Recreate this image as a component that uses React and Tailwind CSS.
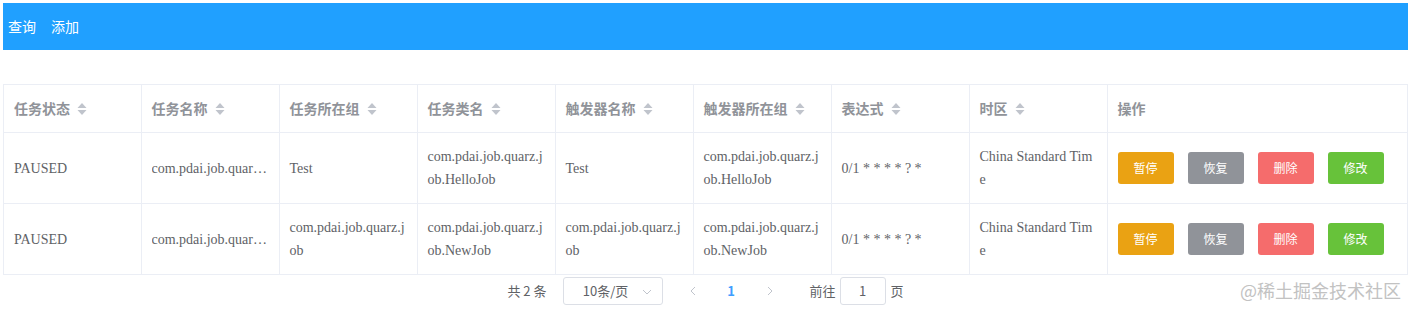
import React from 'react'

const cols = [
  { key: 'state', label: '任务状态' },
  { key: 'name', label: '任务名称' },
  { key: 'group', label: '任务所在组' },
  { key: 'cls', label: '任务类名' },
  { key: 'trigger', label: '触发器名称' },
  { key: 'tgroup', label: '触发器所在组' },
  { key: 'cron', label: '表达式' },
  { key: 'tz', label: '时区' },
]

const rows = [
  {
    state: 'PAUSED',
    name: 'com.pdai.job.quarz.job.HelloJob',
    group: 'Test',
    cls: 'com.pdai.job.quarz.job.HelloJob',
    trigger: 'Test',
    tgroup: 'com.pdai.job.quarz.job.HelloJob',
    cron: '0/1 * * * * ? *',
    tz: 'China Standard Time',
  },
  {
    state: 'PAUSED',
    name: 'com.pdai.job.quarz.job.NewJob',
    group: 'com.pdai.job.quarz.job',
    cls: 'com.pdai.job.quarz.job.NewJob',
    trigger: 'com.pdai.job.quarz.job',
    tgroup: 'com.pdai.job.quarz.job.NewJob',
    cron: '0/1 * * * * ? *',
    tz: 'China Standard Time',
  },
]

const actions = [
  { label: '暂停', cls: 'bg-[#eaa213]' },
  { label: '恢复', cls: 'bg-[#909399]' },
  { label: '删除', cls: 'bg-[#f56c6c]' },
  { label: '修改', cls: 'bg-[#67c23a]' },
]

function SortCaret() {
  return (
    <svg width="10" height="12" viewBox="0 0 10 12" className="ml-[7px] inline-block">
      <path d="M5 0 L9.5 5 L0.5 5 Z" fill="#c0c4cc" />
      <path d="M0.5 7 L9.5 7 L5 12 Z" fill="#c0c4cc" />
    </svg>
  )
}

const sans = { fontFamily: '"Noto Sans CJK SC", "Liberation Sans", sans-serif' }
const serif = { fontFamily: '"Liberation Serif", "Noto Sans CJK SC", serif' }

export default function App() {
  return (
    <div className="relative w-[1413px] h-[313px] bg-white pt-[3px]" style={sans}>
      {/* top bar */}
      <div className="ml-[3px] w-[1405px] h-[47px] bg-[#20a0ff] flex items-center pl-[5px] gap-[15px] text-white text-[14px]">
        <span>查询</span>
        <span>添加</span>
      </div>

      {/* table */}
      <div className="ml-[3px] mt-[34px] w-[1405px] border-l border-t border-[#ebeef5]">
        <table className="w-full table-fixed border-collapse text-[14px]">
          <colgroup>
            {cols.map((c, i) => <col key={c.key} className={i === 0 ? 'w-[137px]' : 'w-[138px]'} />)}
            <col />
          </colgroup>
          <thead>
            <tr>
              {cols.map(c => (
                <th key={c.key} className="border-r border-b border-[#ebeef5] py-[12px] px-[10px] text-left font-bold text-[#909399] leading-[23px]">
                  <div className="flex items-center">
                    <span>{c.label}</span>
                    <SortCaret />
                  </div>
                </th>
              ))}
              <th className="border-r border-b border-[#ebeef5] py-[12px] px-[10px] text-left font-bold text-[#909399] leading-[23px]">操作</th>
            </tr>
          </thead>
          <tbody>
            {rows.map((r, i) => (
              <tr key={i}>
                {cols.map(c => (
                  <td key={c.key} className="border-r border-b border-[#ebeef5] py-[12px] px-[10px] align-middle text-[#606266] leading-[23px]" style={serif}>
                    {c.key === 'name' ? (
                      <div className="truncate">{r[c.key]}</div>
                    ) : (
                      <div className="break-all">{r[c.key]}</div>
                    )}
                  </td>
                ))}
                <td className="border-r border-b border-[#ebeef5] py-[12px] px-[10px] align-middle">
                  <div className="flex items-center gap-[14px]">
                    {actions.map(a => (
                      <button key={a.label} className={`w-[56px] h-[32px] rounded-[3px] text-white text-[12px] ${a.cls}`}>
                        {a.label}
                      </button>
                    ))}
                  </div>
                </td>
              </tr>
            ))}
          </tbody>
        </table>
      </div>

      {/* pagination */}
      <div className="ml-[3px] w-[1405px] mt-[2px] h-[28px] flex items-center justify-center text-[13px] text-[#606266]">
        <span>共 2 条</span>
        <div className="ml-[16px] w-[100px] h-[28px] border border-[#dcdfe6] rounded-[3px] flex items-center relative">
          <span className="flex-1 text-center pr-[14px]">10条/页</span>
          <svg width="10" height="6" viewBox="0 0 10 6" className="absolute right-[10px] top-[11px]">
            <path d="M1 1 L5 5 L9 1" fill="none" stroke="#c0c4cc" strokeWidth="1" />
          </svg>
        </div>
        <div className="ml-[15px] w-[30px] h-[28px] flex items-center justify-center">
          <svg width="6" height="10" viewBox="0 0 6 10">
            <path d="M5 1 L1 5 L5 9" fill="none" stroke="#c0c4cc" strokeWidth="1" />
          </svg>
        </div>
        <div className="ml-[6px] w-[35px] h-[28px] flex items-center justify-center text-[#409eff] font-bold">1</div>
        <div className="ml-[6px] w-[30px] h-[28px] flex items-center justify-center">
          <svg width="6" height="10" viewBox="0 0 6 10">
            <path d="M1 1 L5 5 L1 9" fill="none" stroke="#c0c4cc" strokeWidth="1" />
          </svg>
        </div>
        <span className="ml-[25px]">前往</span>
        <div className="ml-[4px] w-[46px] h-[28px] border border-[#dcdfe6] rounded-[3px] flex items-center justify-center">1</div>
        <span className="ml-[5px]">页</span>
      </div>

      {/* watermark */}
      <div className="absolute left-[1240px] top-[279px] text-[18px] text-[#c2c2c2] leading-[22px]">@稀土掘金技术社区</div>
    </div>
  )
}
